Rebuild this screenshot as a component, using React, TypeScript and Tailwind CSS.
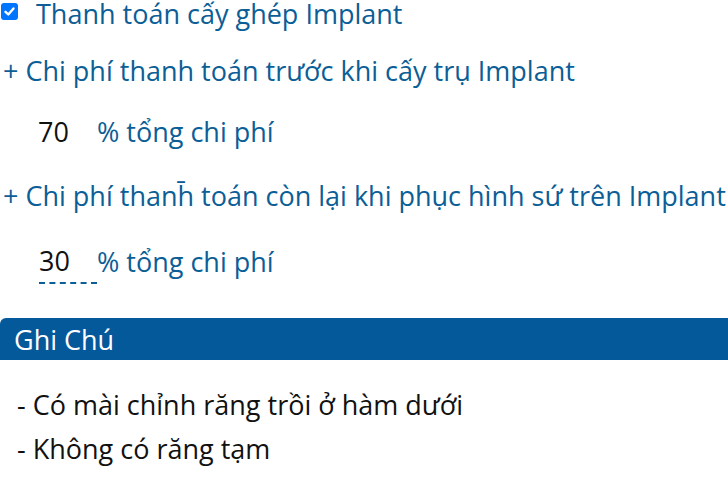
import React from "react";

const blue = "text-[#0b5e96]";

const App = () => {
  return (
    <div className="w-[728px] h-[482px] overflow-hidden bg-white font-['Open_Sans',sans-serif] text-[27px] leading-none">
      <div className="flex items-center h-[30px] -mt-[2px]">
        <span className="ml-[1px] -mt-[3px] flex items-center justify-center w-[17px] h-[17px] rounded-[3px] bg-[#0075ff]">
          <svg width="13" height="13" viewBox="0 0 13 13">
            <path d="M2.5 6.8 L5.3 9.5 L10.5 3.5" fill="none" stroke="white" strokeWidth="2.4" strokeLinecap="round" strokeLinejoin="round" />
          </svg>
        </span>
        <span className={`ml-[18px] ${blue} whitespace-nowrap`}>Thanh toán cấy ghép Implant</span>
      </div>

      <div className={`mt-[27px] h-[30px] flex items-center ${blue} whitespace-nowrap`}>
        <span className="ml-[3px]">+ Chi phí thanh toán trước khi cấy trụ Implant</span>
      </div>

      <div className="mt-[31px] h-[30px] flex items-center whitespace-nowrap">
        <input
          className="ml-[38px] w-[58px] outline-none bg-transparent text-[#111]"
          defaultValue="70"
        />
        <span className={`ml-[1px] ${blue}`}>% tổng chi phí</span>
      </div>

      <div className={`mt-[34px] h-[30px] flex items-center ${blue} whitespace-nowrap`}>
        <span className="ml-[3px]">+ Chi phí thanh̄ toán còn lại khi phục hình sứ trên Implant</span>
      </div>

      <div className="mt-[36px] h-[30px] flex items-center whitespace-nowrap">
        <input
          className="ml-[39px] mt-[4px] w-[58px] outline-none bg-transparent text-[#111] border-b-2 border-dashed border-[#0b5e96] pb-[3px]"
          defaultValue="30"
        />
        <span className={`ml-[0px] ${blue}`}>% tổng chi phí</span>
      </div>

      <div className="mt-[42px] h-[42px] rounded-tl-[6px] bg-[#04599b] flex items-center">
        <span className="ml-[14px] text-white">Ghi Chú</span>
      </div>

      <div className="mt-[29px] text-[#111] whitespace-nowrap">
        <div className="ml-[17px] h-[30px] flex items-center">- Có mài chỉnh răng trồi ở hàm dưới</div>
        <div className="ml-[17px] mt-[14px] h-[30px] flex items-center">- Không có răng tạm</div>
      </div>
    </div>
  );
};

export default App;
